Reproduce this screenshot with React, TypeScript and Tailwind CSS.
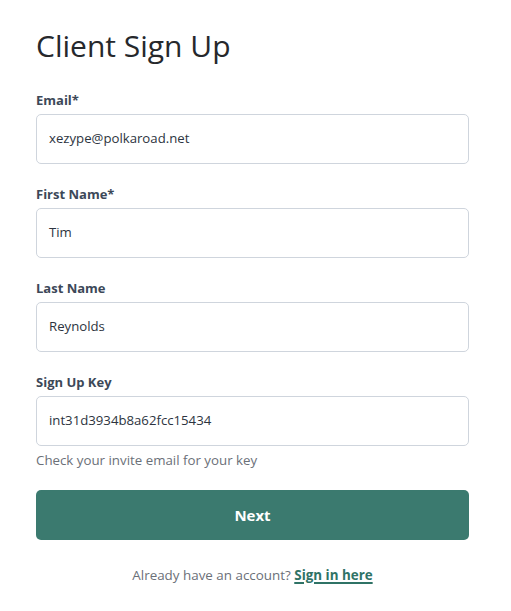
import React from "react";

const font = { fontFamily: '"Open Sans", "Noto Sans", sans-serif' };

function Field({ label, value }: { label: string; value: string }) {
  return (
    <div className="flex flex-col">
      <label className="text-[13px] font-bold text-[#3c4858] leading-[18px] mb-[5px]">{label}</label>
      <div className="h-[50px] rounded-[5px] border border-[#cfd5dd] flex items-center px-[12px] text-[13.2px] text-[#2d3440]">
        {value}
      </div>
    </div>
  );
}

export default function App() {
  return (
    <div className="w-[511px] h-[611px] bg-white" style={font}>
      <div className="pl-[36px] pr-[42px] pt-[26px]">
        <h1 className="text-[30px] leading-[40px] text-[#26282c] font-medium mb-[25px]">Client Sign Up</h1>
        <div className="flex flex-col gap-[21px]">
          <Field label="Email*" value="xezype@polkaroad.net" />
          <Field label="First Name*" value="Tim" />
          <Field label="Last Name" value="Reynolds" />
          <div className="flex flex-col">
            <Field label="Sign Up Key" value="int31d3934b8a62fcc15434" />
            <p className="text-[13.3px] text-[#6b7078] leading-[18px] mt-[5px]">Check your invite email for your key</p>
          </div>
        </div>
        <button className="mt-[21px] w-full h-[50px] rounded-[5px] bg-[#3b7a6f] text-white text-[15px] font-bold">Next</button>
        <p className="mt-[25px] text-center text-[13.4px] text-[#6b7078]">
          Already have an account?{" "}
          <a className="font-bold text-[#2f7366] underline decoration-[1.5px] underline-offset-2">Sign in here</a>
        </p>
      </div>
    </div>
  );
}
